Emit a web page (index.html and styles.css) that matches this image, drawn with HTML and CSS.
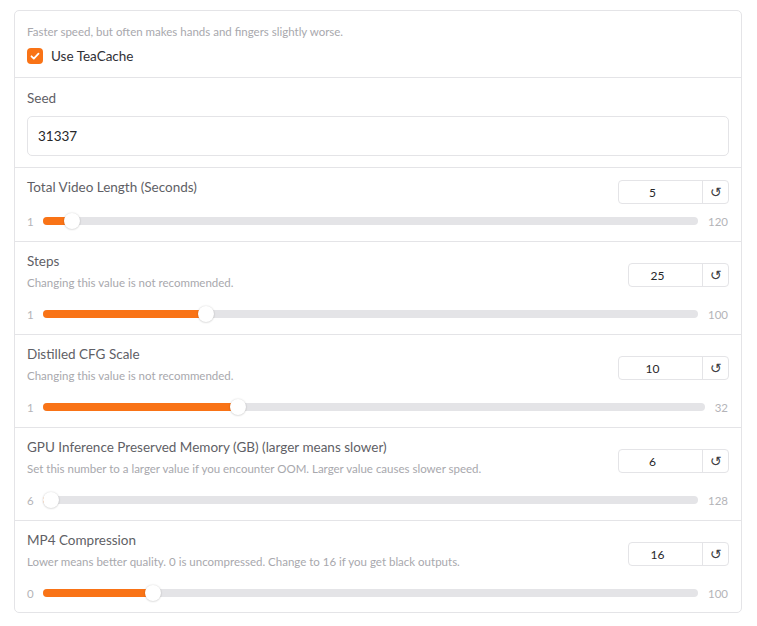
FILE: index.html
```html
<!DOCTYPE html>
<html>
<head>
<meta charset="utf-8">
<link rel="stylesheet" href="styles.css">
</head>
<body>
<div class="panel">
  <div class="block block-check">
    <div class="info">Faster speed, but often makes hands and fingers slightly worse.</div>
    <label class="check">
      <span class="check-box"><svg width="16" height="16" viewBox="0 0 16 16"><path d="M4.5 8.3l2.3 2.3 4.7-4.9" fill="none" stroke="#fff" stroke-width="1.8" stroke-linecap="round" stroke-linejoin="round"/></svg></span>
      <span class="check-label">Use TeaCache</span>
    </label>
  </div>

  <div class="block block-seed">
    <div class="label">Seed</div>
    <div class="text-input">31337</div>
  </div>

  <div class="block slider-block">
    <div class="head">
      <div class="titles"><div class="label">Total Video Length (Seconds)</div></div>
      <div class="num num-wide"><span class="num-val">5</span><span class="reset">↺</span></div>
    </div>
    <div class="slider">
      <span class="min">1</span>
      <div class="track" style="--p:0.0336"><div class="fill"></div><div class="thumb"></div></div>
      <span class="max">120</span>
    </div>
  </div>

  <div class="block slider-block">
    <div class="head">
      <div class="titles"><div class="label">Steps</div><div class="info info-sub">Changing this value is not recommended.</div></div>
      <div class="num num-narrow num-low"><span class="num-val">25</span><span class="reset">↺</span></div>
    </div>
    <div class="slider">
      <span class="min">1</span>
      <div class="track" style="--p:0.2424"><div class="fill"></div><div class="thumb"></div></div>
      <span class="max">100</span>
    </div>
  </div>

  <div class="block slider-block">
    <div class="head">
      <div class="titles"><div class="label">Distilled CFG Scale</div><div class="info info-sub">Changing this value is not recommended.</div></div>
      <div class="num num-wide num-low"><span class="num-val">10</span><span class="reset">↺</span></div>
    </div>
    <div class="slider">
      <span class="min">1</span>
      <div class="track" style="--p:0.2903"><div class="fill"></div><div class="thumb"></div></div>
      <span class="max">32</span>
    </div>
  </div>

  <div class="block slider-block">
    <div class="head">
      <div class="titles"><div class="label">GPU Inference Preserved Memory (GB) (larger means slower)</div><div class="info info-sub">Set this number to a larger value if you encounter OOM. Larger value causes slower speed.</div></div>
      <div class="num num-wide num-low"><span class="num-val">6</span><span class="reset">↺</span></div>
    </div>
    <div class="slider">
      <span class="min">6</span>
      <div class="track" style="--p:0"><div class="fill"></div><div class="thumb"></div></div>
      <span class="max">128</span>
    </div>
  </div>

  <div class="block slider-block block-last">
    <div class="head">
      <div class="titles"><div class="label">MP4 Compression</div><div class="info info-sub">Lower means better quality. 0 is uncompressed. Change to 16 if you get black outputs.</div></div>
      <div class="num num-narrow num-low"><span class="num-val">16</span><span class="reset">↺</span></div>
    </div>
    <div class="slider">
      <span class="min">0</span>
      <div class="track" style="--p:0.16"><div class="fill"></div><div class="thumb"></div></div>
      <span class="max">100</span>
    </div>
  </div>
</div>
</body>
</html>
```

FILE: styles.css
```css
* { box-sizing: border-box; }
body {
  margin: 0;
  background: #fff;
  font-family: Lato, "Noto Sans", sans-serif;
}
.panel {
  margin: 10px 0 0 14px;
  width: 728px;
  border: 1px solid #e4e4e7;
  border-radius: 5px;
  background: #fff;
}
.block {
  padding: 9px 12px 12px;
  border-top: 1px solid #e4e4e7;
}
.block:first-child { border-top: none; }
.block-check { padding: 12px 12px 11px; }
.block-seed { padding: 10px 12px 11px; }
.block-last { padding-bottom: 11px; }

.label {
  font-size: 13.5px;
  line-height: 20px;
  color: #5f5f66;
}
.info {
  font-size: 11.5px;
  line-height: 18px;
  color: #a8a8ad;
}
.info-sub {
  margin-top: 3px;
  padding-bottom: 5px;
}

.check {
  display: flex;
  align-items: center;
  gap: 8px;
  margin-top: 5px;
  height: 20px;
}
.check-box {
  width: 16px;
  height: 16px;
  border-radius: 4px;
  background: #f97316;
  display: flex;
}
.check-label {
  font-size: 13.5px;
  color: #303036;
}

.text-input {
  margin-top: 8px;
  height: 40px;
  border: 1px solid #e4e4e7;
  border-radius: 5px;
  padding: 0 10px;
  display: flex;
  align-items: center;
  font-size: 13.5px;
  color: #27272a;
}

.head {
  display: flex;
  justify-content: space-between;
  align-items: flex-start;
}
.num {
  display: flex;
  height: 24px;
  border: 1px solid #e4e4e7;
  border-radius: 4px;
  margin-top: 3px;
  flex-shrink: 0;
}
.num-low { margin-top: 12px; }
.num-wide { width: 111px; }
.num-narrow { width: 101px; }
.num-val {
  flex: 1;
  display: flex;
  align-items: center;
  justify-content: center;
  padding-right: 16px;
  font-size: 12px;
  color: #27272a;
  border-right: 1px solid #e4e4e7;
}
.reset {
  width: 25px;
  display: flex;
  align-items: center;
  justify-content: center;
  font-family: "DejaVu Sans", sans-serif;
  font-size: 14px;
  color: #3f3f46;
}

.slider {
  display: flex;
  align-items: center;
  height: 16px;
  margin-top: 9px;
  font-size: 11.5px;
  color: #b4b4b8;
}
.min {
  width: 16px;
}
.max {
  margin-left: 10px;
  margin-right: 1px;
}
.track {
  position: relative;
  flex: 1;
  height: 8px;
  border-radius: 4px;
  background: #e4e4e7;
}
.fill {
  position: absolute;
  left: 0;
  top: 0;
  height: 8px;
  border-radius: 4px;
  background: #f97316;
  width: calc(8px + var(--p) * (100% - 16px));
}
.thumb {
  position: absolute;
  top: 50%;
  left: calc(var(--p) * (100% - 16px));
  width: 16px;
  height: 16px;
  margin-top: -8px;
  border-radius: 50%;
  background: #fff;
  box-shadow: 0 0 2px rgba(0,0,0,0.18), 0 1px 2px rgba(0,0,0,0.08);
}
```
